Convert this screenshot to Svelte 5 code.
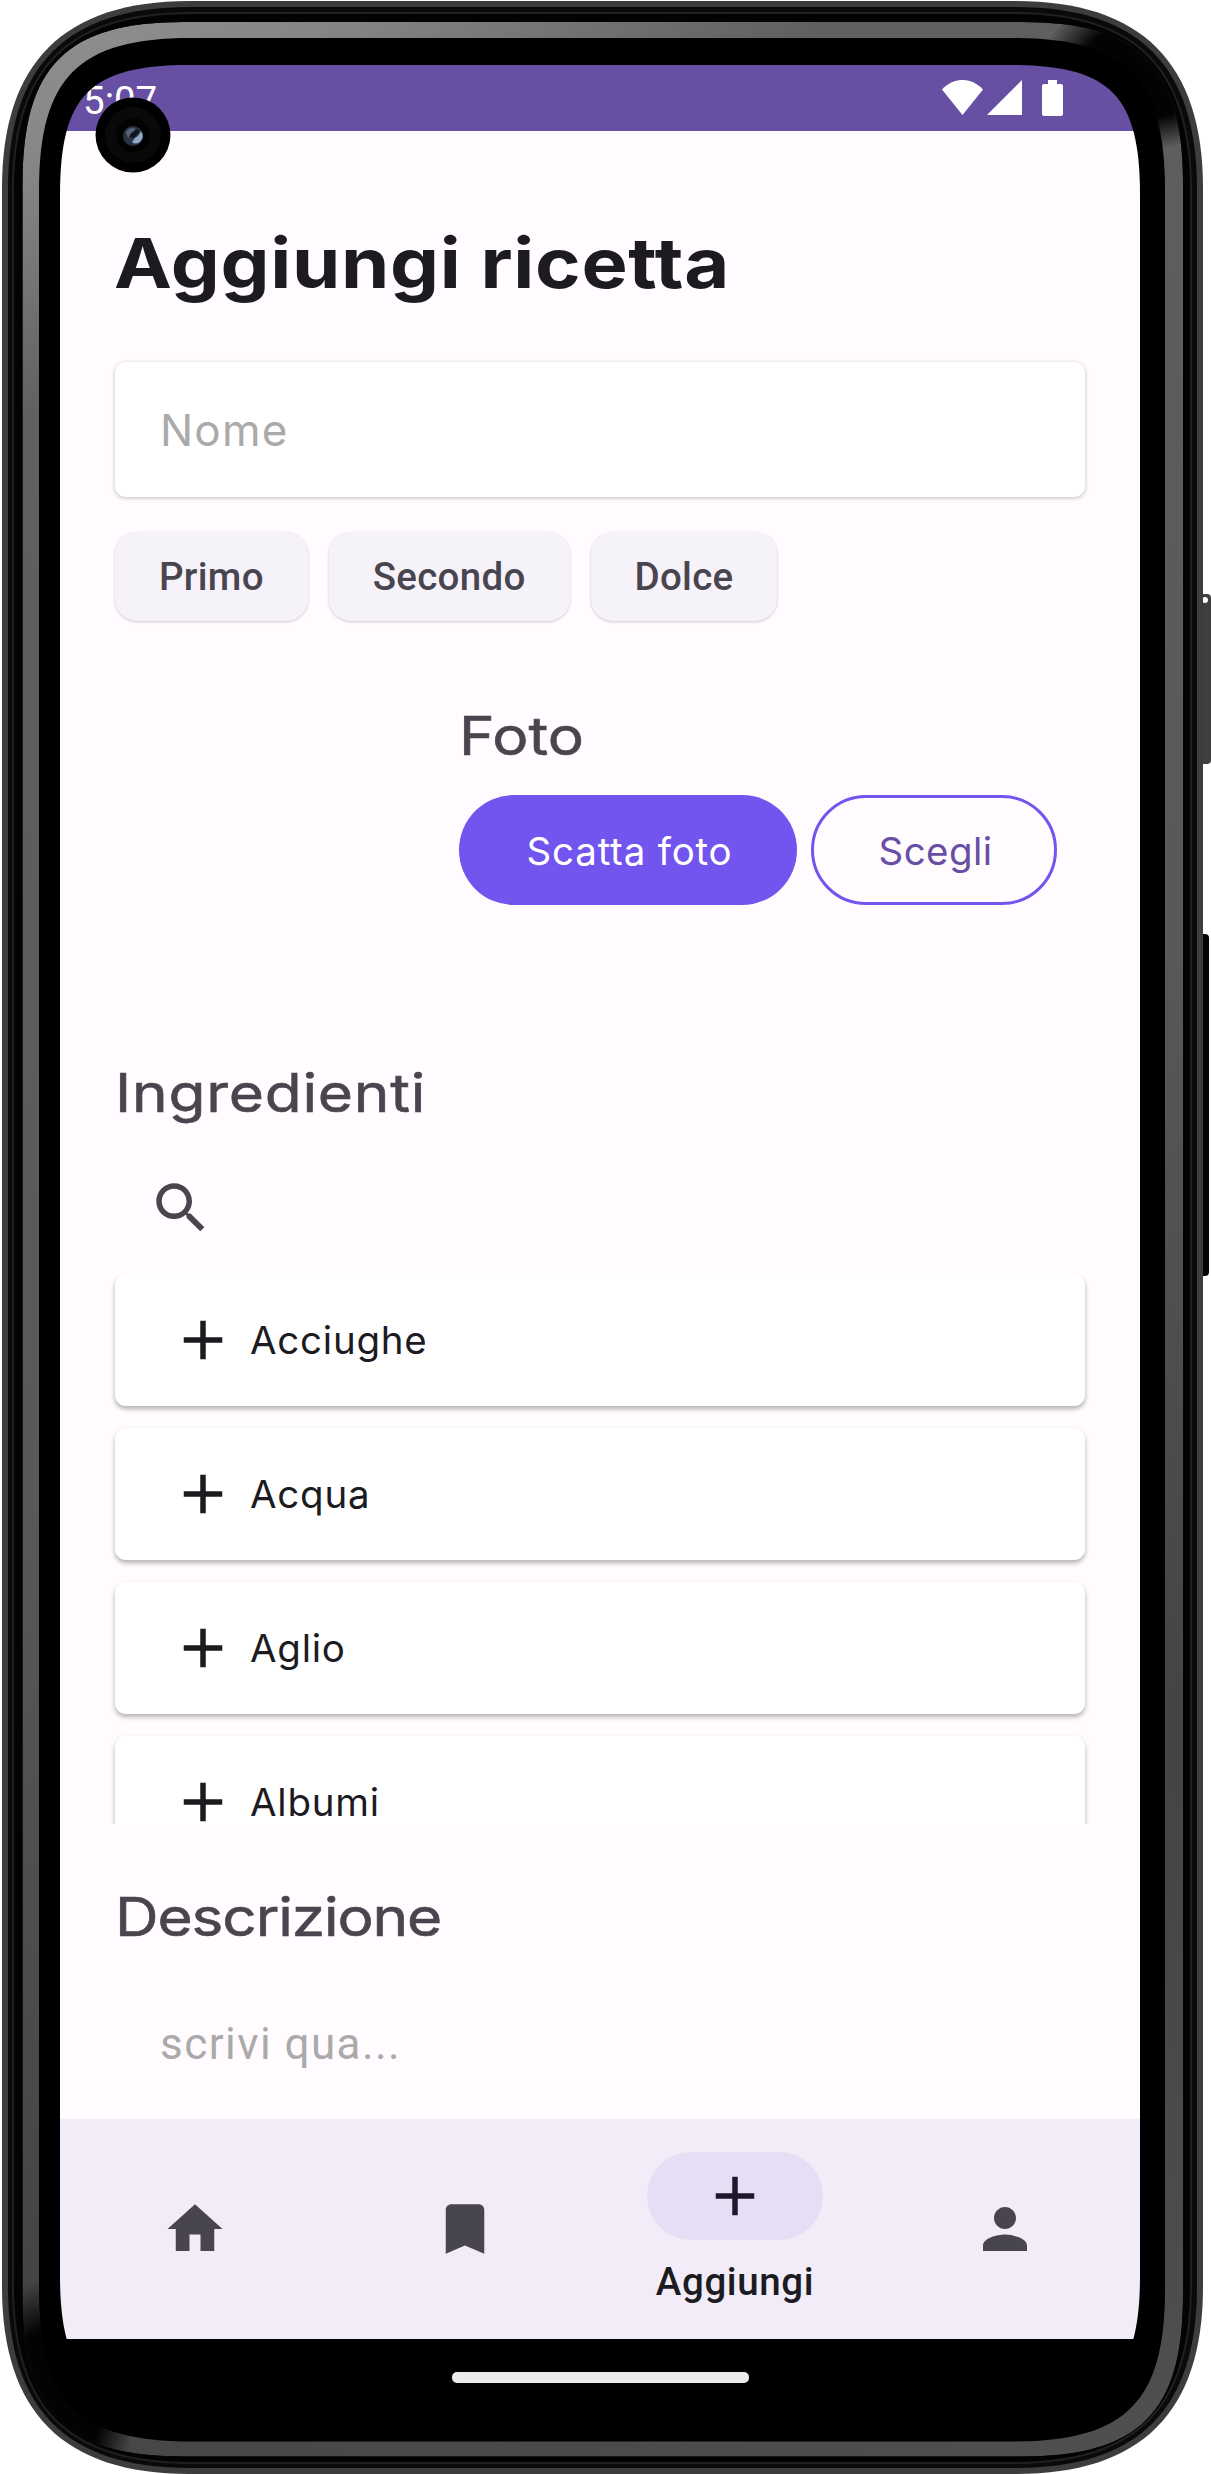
<script lang="ts">
  const chips = ['Primo', 'Secondo', 'Dolce'];
  const ingredients = ['Acciughe', 'Acqua', 'Aglio', 'Albumi'];
  const plus = 'M19 13h-6v6h-2v-6H5v-2h6V5h2v6h6v2z';

  // Rounded rectangle whose corners are cubic curves; a sets how square they are.
  function squircle(x0: number, y0: number, x1: number, y1: number, l: number, a: number) {
    const c = l * a;
    return `M${x0} ${y0 + l}C${x0} ${y0 + c} ${x0 + c} ${y0} ${x0 + l} ${y0}H${x1 - l}C${x1 - c} ${y0} ${x1} ${y0 + c} ${x1} ${y0 + l}V${y1 - l}C${x1} ${y1 - c} ${x1 - c} ${y1} ${x1 - l} ${y1}H${x0 + l}C${x0 + c} ${y1} ${x0} ${y1 - c} ${x0} ${y1 - l}Z`;
  }
  const body = squircle(2, 1, 1203, 2474, 187, 0.33);
  const rim = squircle(8, 7, 1197, 2468, 182, 0.32);
  const groove = squircle(13, 13, 1191, 2463, 177, 0.31);
  const glowOuter = squircle(22.5, 22, 1183, 2456.5, 162, 0.27);
  const glowInner = squircle(39, 38, 1165, 2441.5, 152, 0.26);
</script>

<div class="device">
  <svg class="frame" viewBox="0 0 1211 2474" aria-hidden="true">
    <defs>
      <linearGradient id="side" x1="0" y1="0" x2="1211" y2="2474" gradientUnits="userSpaceOnUse">
        <stop offset="0" stop-color="#929292" />
        <stop offset="0.06" stop-color="#868686" />
        <stop offset="0.14" stop-color="#606060" />
        <stop offset="0.5" stop-color="#585858" />
        <stop offset="0.75" stop-color="#444" />
        <stop offset="1" stop-color="#505050" />
      </linearGradient>
      <radialGradient id="shade"><stop offset="0.6" stop-color="#030303" /><stop offset="1" stop-color="#030303" stop-opacity="0" /></radialGradient>
      <clipPath id="glow"><path d={glowOuter} /></clipPath>
    </defs>
    <rect x="1200" y="594" width="11" height="170" rx="4" fill="#3f3f3f" />
    <circle cx="1205" cy="600" r="3" fill="#fff" />
    <rect x="1198" y="934" width="11" height="342" rx="4" fill="#050505" />
    <path d={body} fill="#3c3e3c" />
    <path d={rim} fill="#0a0a0a" />
    <path d={groove} fill="#030303" stroke="#202020" stroke-width="2" />
    <g clip-path="url(#glow)">
      <path d={glowOuter} fill="url(#side)" />
      <ellipse cx="1145" cy="70" rx="105" ry="80" fill="url(#shade)" />
      <ellipse cx="50" cy="2405" rx="85" ry="125" fill="url(#shade)" />
    </g>
    <path d={glowInner} fill="#000" />
  </svg>

  <div class="screen">
    <header class="status">
      <span class="time">5:07</span>
      <div class="signals">
        <svg class="wifi" viewBox="0 0 41 35"><path d="M0 9.500C12-3.200 29-3.200 41 9.500L20.500 35Z" /></svg>
        <svg class="cell" viewBox="0 0 35 35"><path d="M35 0V35H0Z" /></svg>
        <svg class="battery" viewBox="0 0 21 36"><path d="M6 0h9v4h4a2 2 0 0 1 2 2v28a2 2 0 0 1-2 2H2a2 2 0 0 1-2-2V6a2 2 0 0 1 2-2h4z" /></svg>
      </div>
    </header>

    <main>
      <h1>Aggiungi ricetta</h1>
      <div class="field"><span>Nome</span></div>
      <div class="chips">
        {#each chips as chip}<button class="chip">{chip}</button>{/each}
      </div>

      <section class="photo">
        <h2>Foto</h2>
        <div class="actions">
          <button class="filled">Scatta foto</button>
          <button class="outlined">Scegli</button>
        </div>
      </section>

      <h2 class="ingredients">Ingredienti</h2>
      <div class="search">
        <svg viewBox="0 0 24 24"><path d="M15.500 14h-.79l-.28-.27C15.410 12.590 16 11.110 16 9.500 16 5.910 13.090 3 9.500 3S3 5.910 3 9.500 5.910 16 9.500 16c1.610 0 3.090-.59 4.230-1.570l.27.28v.79l5 4.990L20.490 19l-4.990-5zm-6 0C7.010 14 5 11.990 5 9.500S7.010 5 9.500 5 14 7.010 14 9.500 11.990 14 9.500 14z" /></svg>
      </div>
      <ul>
        {#each ingredients as item}
          <li><svg viewBox="0 0 24 24"><path d={plus} /></svg><span>{item}</span></li>
        {/each}
      </ul>
      <h2 class="description">Descrizione</h2>
      <div class="note">scrivi qua...</div>
    </main>

    <nav>
      <div class="tab"><svg viewBox="0 0 24 24"><path d="M10 20v-6h4v6h5v-8h3L12 3 2 12h3v8z" /></svg></div>
      <div class="tab"><svg viewBox="0 0 24 24"><path d="M17 3H7c-1.100 0-1.990.9-1.990 2L5 21l7-3 7 3V5c0-1.100-.9-2-2-2z" /></svg></div>
      <div class="tab active">
        <div class="pill"><svg viewBox="0 0 24 24"><path d={plus} /></svg></div>
        <span>Aggiungi</span>
      </div>
      <div class="tab"><svg viewBox="0 0 24 24"><path d="M12 12c2.210 0 4-1.790 4-4s-1.790-4-4-4-4 1.790-4 4 1.790 4 4 4zm0 2c-2.670 0-8 1.340-8 4v2h16v-2c0-2.660-5.330-4-8-4z" /></svg></div>
    </nav>
    <footer><div class="handle"></div></footer>
  </div>

  <svg class="camera" viewBox="0 0 76 76" aria-hidden="true">
    <circle cx="38" cy="38" r="37.500" fill="#000" />
    <circle cx="38" cy="38" r="28" fill="#090909" />
    <circle cx="38" cy="38" r="17" fill="#020202" />
    <circle cx="38" cy="39" r="10" fill="#2c3443" />
    <path d="M31 35q4-6 10-3l-5 4q-2 4-3 5z" fill="#55647b" />
    <path d="M46 34q4 6-1 11-5 3-8 0l3-4q4-2 6-7z" fill="#8fa8c8" />
    <path d="M35 38l7-6 3 2-5 6q-5 2-5-2z" fill="#10141d" />
  </svg>
</div>

<style>
  :global(body) { background: #fff; }
  .device { position: relative; width: 1211px; height: 2474px; overflow: hidden; box-sizing: border-box; padding: 65px 71px 0 60px; font-family: Inter, sans-serif; }
  .frame { position: absolute; left: 0; top: 0; width: 1211px; height: 2474px; }
  .screen {
    position: relative; width: 1080px; height: 2340px; display: flex; flex-direction: column;
    clip-path: path('M0 130C0 30 30 0 130 0H950C1050 0 1080 30 1080 130V2210C1080 2310 1050 2340 950 2340H130C30 2340 0 2310 0 2210Z');
  }
  .status { height: 66px; background: #6750a4; display: flex; justify-content: space-between; box-sizing: border-box; padding: 15px 77px 0 23px; color: #fff; }
  .time { font: 400 38.500px/42px Roboto, sans-serif; }
  .signals { display: flex; fill: #fff; }
  .wifi { width: 41px; height: 35px; margin-right: 4px; }
  .cell { width: 35px; height: 35px; margin-right: 20px; }
  .battery { width: 21px; height: 36px; }
  main { flex: 1; min-height: 0; padding: 0 55px; display: flex; flex-direction: column; background: #fffbff; }
  h1, h2 { transform-origin: left center; width: max-content; white-space: nowrap; font-variant-ligatures: none; }
  h1 { margin: 92px 0 0 -1px; font-size: 69px; line-height: 80px; font-weight: 700; letter-spacing: .6px; color: #1c1b1f; transform: scaleX(1.125); }
  h2 { margin: 0; font-size: 53px; line-height: 64px; font-weight: 400; color: #49454f; -webkit-text-stroke: .6px #49454f; transform: scaleX(1.14); }
  .field { margin-top: 59px; height: 135px; flex: none; box-sizing: border-box; border-radius: 11px; background: #fff; padding: 0 0 0 45px; display: flex; align-items: center; font-size: 44px; letter-spacing: 1.200px; color: #aaa; box-shadow: 0 1px 4px rgba(0, 0, 0, .25); }
  .chips { display: flex; gap: 21px; margin-top: 35px; }
  .chip { height: 89px; border: 0; border-radius: 22px; background: #f6f2f9; color: #49454f; font: 500 38.500px/89px Roboto, sans-serif; letter-spacing: .275px; padding: 0 44px; box-shadow: 0 1px 3px rgba(0, 0, 0, .2); }
  .photo { margin: 83px 0 0 344px; height: 357px; flex: none; box-sizing: border-box; }
  .actions { display: flex; gap: 14px; margin-top: 27px; }
  .actions button { height: 110px; border-radius: 55px; font: 400 38.500px Inter, sans-serif; letter-spacing: .8px; box-sizing: border-box; padding: 2px 0 0 3px; }
  .filled { width: 338px; border: 0; background: #7254ee; color: #fff; }
  .actions .outlined { width: 246px; border: 3px solid #7254ee; background: none; color: #6750a4; letter-spacing: .4px; }
  .ingredients { letter-spacing: .65px; }
  .search { height: 149px; flex: none; padding: 50px 0 0 33px; box-sizing: border-box; }
  .search svg { width: 66px; height: 66px; fill: #49454f; display: block; }
  ul { list-style: none; margin: 0 -20px; padding: 0 20px; height: 550px; overflow: hidden; display: flex; flex-direction: column; gap: 22px; flex: none; }
  li { height: 132px; flex: none; border-radius: 11px; background: #fff; box-shadow: 0 3px 5px rgba(0, 0, 0, .3); display: flex; align-items: center; padding-left: 55px; font-size: 38.500px; letter-spacing: .75px; color: #1c1b1f; }
  li span { line-height: 1; }
  li svg { width: 66px; height: 66px; fill: #1c1b1f; margin-right: 14px; }
  .description { margin-top: 61px; letter-spacing: -1px; }
  .note { margin-top: 65px; padding-left: 45px; font: 400 44px/60px Roboto, sans-serif; letter-spacing: 1.450px; color: #aaa; }
  nav { height: 220px; flex: none; display: grid; grid-template-columns: repeat(4, 1fr); background: #f1ecf7; }
  .tab { display: flex; flex-direction: column; align-items: center; justify-content: center; fill: #49454f; }
  .tab svg { width: 66px; height: 66px; }
  .active { justify-content: flex-start; padding-top: 33px; font: 500 38.500px/44px Roboto, sans-serif; letter-spacing: .6px; color: #1c1b1f; fill: #1d192b; }
  .pill { width: 176px; height: 88px; border-radius: 44px; background: #e7def6; display: grid; place-items: center; margin-bottom: 20px; }
  footer { height: 66px; flex: none; background: #000; display: flex; justify-content: center; padding-top: 33px; box-sizing: border-box; }
  .handle { width: 297px; height: 11px; border-radius: 5px; background: #ececec; }
  .camera { position: absolute; left: 95px; top: 97px; width: 76px; height: 76px; }
</style>
